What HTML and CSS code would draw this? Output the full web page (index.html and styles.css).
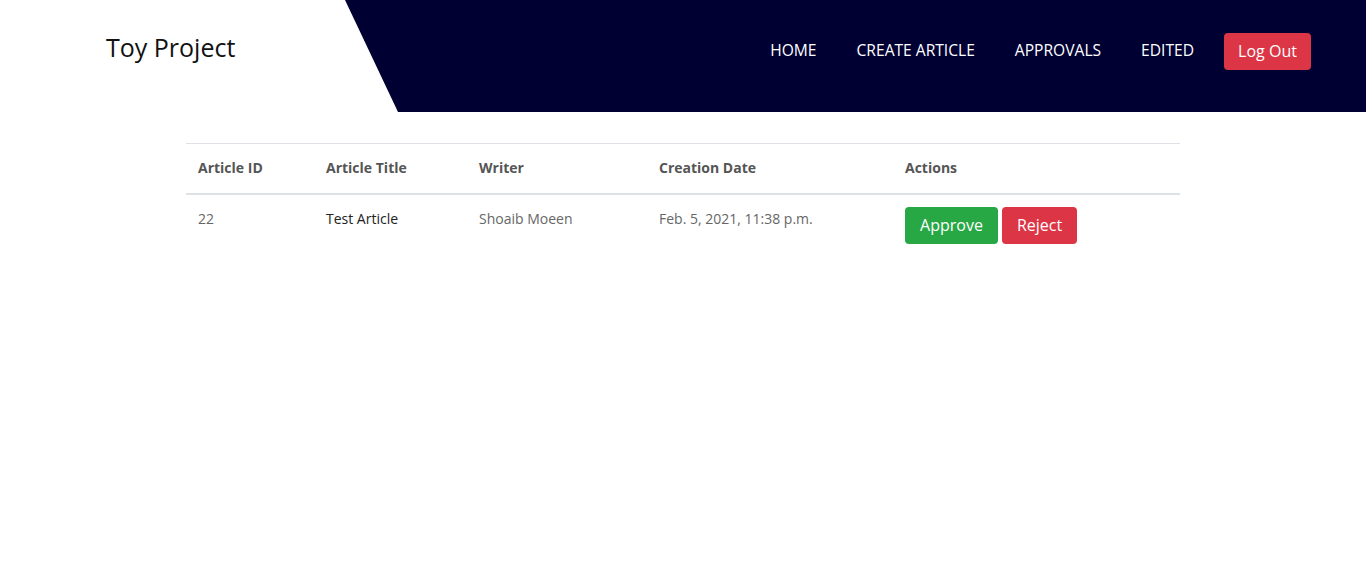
FILE: index.html
```html
<!DOCTYPE html>
<html lang="en">
<head>
<meta charset="utf-8">
<title>Toy Project</title>
<link rel="stylesheet" href="styles.css">
</head>
<body>
<header class="site-header">
  <div class="brand-area">
    <a class="brand" href="#">Toy Project</a>
  </div>
  <nav class="nav-area">
    <svg class="slant" viewBox="0 0 53 112" preserveAspectRatio="none" aria-hidden="true"><polygon points="0,0 53,112 0,112"/></svg>
    <ul class="nav-links">
      <li><a href="#">HOME</a></li>
      <li><a href="#">CREATE ARTICLE</a></li>
      <li><a href="#">APPROVALS</a></li>
      <li><a href="#">EDITED</a></li>
      <li><a class="btn btn-danger btn-logout" href="#">Log Out</a></li>
    </ul>
  </nav>
</header>
<main class="content">
  <table class="table">
    <thead>
      <tr>
        <th class="c-id">Article ID</th>
        <th class="c-title">Article Title</th>
        <th class="c-writer">Writer</th>
        <th class="c-date">Creation Date</th>
        <th class="c-actions">Actions</th>
      </tr>
    </thead>
    <tbody>
      <tr>
        <td>22</td>
        <td class="title-cell">Test Article</td>
        <td>Shoaib Moeen</td>
        <td>Feb. 5, 2021, 11:38 p.m.</td>
        <td class="actions">
          <a class="btn btn-success" href="#">Approve</a>
          <a class="btn btn-danger" href="#">Reject</a>
        </td>
      </tr>
    </tbody>
  </table>
</main>
</body>
</html>
```
FILE: styles.css
```css
* { box-sizing: border-box; }
html, body { margin: 0; padding: 0; }
body {
  font-family: "Open Sans", "Noto Sans", sans-serif;
  color: #212529;
  background: #fff;
}
a { text-decoration: none; }

.site-header {
  display: flex;
  height: 112px;
}
.brand-area {
  width: 345px;
  flex: none;
  padding: 31px 0 0 106px;
}
.brand {
  font-size: 25px;
  line-height: 32px;
  color: #111;
  font-weight: 400;
}
.nav-area {
  flex: 1;
  display: flex;
  background: #000033;
  position: relative;
}
.slant {
  position: absolute;
  left: 0;
  top: 0;
  width: 53px;
  height: 112px;
  fill: #fff;
}
.nav-links {
  list-style: none;
  margin: 0 0 0 auto;
  padding: 33px 55px 0 0;
  display: flex;
  align-items: flex-start;
}
.nav-links li a {
  display: block;
  color: #fff;
  font-size: 15.6px;
  line-height: 35px;
  padding: 0 20px;
  font-weight: 500;
}
.nav-links li:last-child a { margin-left: 10px; }

.btn {
  display: inline-block;
  color: #fff;
  border-radius: 4px;
  font-size: 16px;
  line-height: 37px;
  height: 37px;
  text-align: center;
  padding: 0 12px;
}
.nav-links li a.btn-logout {
  padding: 0 12px;
  font-size: 16px;
  line-height: 36px;
  width: 87px;
}
.btn-danger { background: #dc3545; }
.btn-success { background: #28a745; }

.content {
  padding: 31px 0 0 186px;
}
.table {
  width: 994px;
  border-collapse: collapse;
  font-size: 14px;
  line-height: 24px;
}
.table th, .table td {
  text-align: left;
  vertical-align: top;
  padding: 12px;
}
.table th {
  font-weight: 700;
  color: #555;
  padding-bottom: 13px;
  border-top: 1px solid #dee2e6;
  border-bottom: 2px solid #dee2e6;
}
.table td { color: #666; }
.table td.title-cell { color: #222; }
.c-id { width: 128px; }
.c-title { width: 153px; }
.c-writer { width: 180px; }
.c-date { width: 246px; }
.actions { font-size: 0; }
.actions .btn { font-size: 16px; }
.actions .btn-success { width: 93px; margin-right: 4px; }
.actions .btn-danger { width: 75px; }
```
